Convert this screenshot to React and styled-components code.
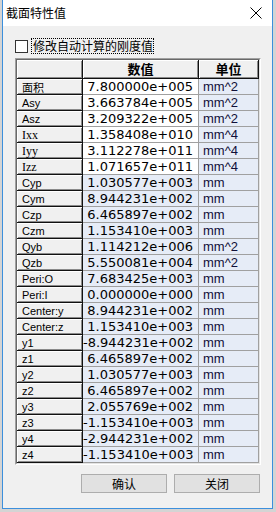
import React from "react";
import styled, { createGlobalStyle } from "styled-components";

const Global = createGlobalStyle`
  html, body { margin: 0; padding: 0; }
  body {
    width: 276px;
    height: 512px;
    overflow: hidden;
    background: #d4d4d4;
    font-family: "Liberation Sans", "Noto Sans CJK SC", sans-serif;
  }
`;

const cjk = `"Noto Sans CJK SC", "Liberation Sans", sans-serif`;

const Page = styled.div`
  padding-left: 2px;
  height: 512px;
  box-sizing: border-box;
`;

const Window = styled.div`
  width: 271px;
  height: 509px;
  box-sizing: border-box;
  border: 1px solid #3c8fdc;
  border-top: none;
  background: #f0f0f0;
  display: flex;
  flex-direction: column;
`;

const TitleBar = styled.div`
  height: 26px;
  flex: none;
  background: #ffffff;
  display: flex;
  align-items: center;
  justify-content: space-between;
  padding: 0 10px 0 3px;
`;

const Title = styled.span`
  font-family: ${cjk};
  font-size: 12px;
  color: #000;
  line-height: 26px;
`;

const Close = styled.svg`
  width: 12px;
  height: 12px;
  display: block;
`;

const Body = styled.div`
  flex: 1;
  padding: 12px 11px 0 12px;
  display: flex;
  flex-direction: column;
`;

const CheckRow = styled.div`
  display: flex;
  align-items: center;
  height: 16px;
  gap: 2px;
`;

const Box = styled.span`
  width: 13px;
  height: 13px;
  box-sizing: border-box;
  border: 1px solid #333;
  background: #fff;
  flex: none;
`;

const CheckLabel = styled.span`
  font-family: ${cjk};
  font-size: 12px;
  line-height: 14px;
  color: #000;
  border: 1px dotted #000;
  padding: 0 0 0 1px;
  margin-left: 1px;
`;

const Frame = styled.div`
  margin-top: 4px;
  width: 246px;
  box-sizing: border-box;
  border: 1px solid;
  border-color: #a0a0a0 #ffffff #ffffff #a0a0a0;
`;

const FrameInner = styled.div`
  border: 1px solid;
  border-color: #696969 #e3e3e3 #e3e3e3 #696969;
  background: #fff;
`;

const Row = styled.div`
  display: grid;
  grid-template-columns: 66px 116px 60px;
  height: ${(p) => (p.$head ? 19 : 16)}px;
`;

const Raised = styled.div`
  box-sizing: border-box;
  background: #f0f0f0;
  border-right: 1px solid #111;
  border-bottom: 1px solid #111;
  box-shadow: inset 1px 1px 0 #fff, inset -1px -1px 0 #8a8a8a;
  overflow: hidden;
  white-space: nowrap;
`;

const HeadCell = styled(Raised)`
  font-family: ${cjk};
  font-weight: 700;
  font-size: 13px;
  line-height: 18px;
  text-align: center;
  color: #000;
`;

const LabelCell = styled(Raised)`
  font-family: ${(p) =>
    p.$serif
      ? `"Liberation Serif", serif`
      : p.$cjk
      ? cjk
      : `"Liberation Sans", sans-serif`};
  font-size: ${(p) => (p.$cjk ? 11 : p.$serif ? 12 : 11)}px;
  line-height: 16px;
  padding-left: 5px;
  color: #000;
`;

const DataCell = styled.div`
  box-sizing: border-box;
  background: ${(p) => (p.$white ? "#ffffff" : "#e6ecf7")};
  border-right: 1px solid #a0a0a0;
  border-bottom: 1px solid #a0a0a0;
  white-space: nowrap;
  overflow: hidden;
  color: #000;
`;

const ValueCell = styled(DataCell)`
  font-family: "DejaVu Sans", sans-serif;
  font-size: 13px;
  line-height: 15px;
  text-align: right;
  padding-right: 5px;
`;

const UnitCell = styled(DataCell)`
  font-family: "Liberation Sans", sans-serif;
  font-size: 13px;
  line-height: 15px;
  padding-left: 4px;
  color: #10103a;
`;

const ButtonRow = styled.div`
  display: flex;
  gap: 7px;
  padding-left: 66px;
  margin-top: 9px;
`;

const Button = styled.button`
  width: 86px;
  height: 19px;
  box-sizing: border-box;
  border: 1px solid #adadad;
  background: #e1e1e1;
  font-family: ${cjk};
  font-size: 12px;
  line-height: 17px;
  padding: 0;
  color: #000;
`;

const rows = [
  ["面积", "7.800000e+005", "mm^2"],
  ["Asy", "3.663784e+005", "mm^2"],
  ["Asz", "3.209322e+005", "mm^2"],
  ["Ixx", "1.358408e+010", "mm^4"],
  ["Iyy", "3.112278e+011", "mm^4"],
  ["Izz", "1.071657e+011", "mm^4"],
  ["Cyp", "1.030577e+003", "mm"],
  ["Cym", "8.944231e+002", "mm"],
  ["Czp", "6.465897e+002", "mm"],
  ["Czm", "1.153410e+003", "mm"],
  ["Qyb", "1.114212e+006", "mm^2"],
  ["Qzb", "5.550081e+004", "mm^2"],
  ["Peri:O", "7.683425e+003", "mm"],
  ["Peri:I", "0.000000e+000", "mm"],
  ["Center:y", "8.944231e+002", "mm"],
  ["Center:z", "1.153410e+003", "mm"],
  ["y1", "-8.944231e+002", "mm"],
  ["z1", "6.465897e+002", "mm"],
  ["y2", "1.030577e+003", "mm"],
  ["z2", "6.465897e+002", "mm"],
  ["y3", "2.055769e+002", "mm"],
  ["z3", "-1.153410e+003", "mm"],
  ["y4", "-2.944231e+002", "mm"],
  ["z4", "-1.153410e+003", "mm"],
];

export default function App() {
  return (
    <>
      <Global />
      <Page>
        <Window>
          <TitleBar>
            <Title>截面特性值</Title>
            <Close viewBox="0 0 12 12">
              <path d="M0.5 0.5 L11.5 11.5 M11.5 0.5 L0.5 11.5" stroke="#000" strokeWidth="1" fill="none" />
            </Close>
          </TitleBar>
          <Body>
            <CheckRow>
              <Box />
              <CheckLabel>修改自动计算的刚度值</CheckLabel>
            </CheckRow>
            <Frame>
              <FrameInner>
                <Row $head>
                  <HeadCell />
                  <HeadCell>数值</HeadCell>
                  <HeadCell>单位</HeadCell>
                </Row>
                {rows.map(([label, value, unit], i) => (
                  <Row key={label}>
                    <LabelCell
                      $cjk={/[\u4e00-\u9fff]/.test(label)}
                      $serif={/^I/.test(label)}
                    >
                      {label}
                    </LabelCell>
                    <ValueCell $white={i < 6}>{value}</ValueCell>
                    <UnitCell>{unit}</UnitCell>
                  </Row>
                ))}
              </FrameInner>
            </Frame>
            <ButtonRow>
              <Button>确认</Button>
              <Button>关闭</Button>
            </ButtonRow>
          </Body>
        </Window>
      </Page>
    </>
  );
}
